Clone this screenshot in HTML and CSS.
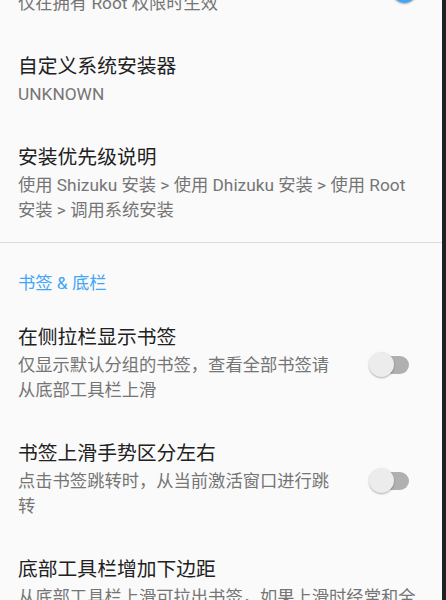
FILE: index.html
```html
<!DOCTYPE html>
<html lang="zh-CN">
<head>
  <meta charset="UTF-8">
  <title>设置</title>
  <link rel="stylesheet" href="styles.css">
</head>
<body>

  <div class="screen">
    <div class="list">

      <div class="pref">
        <div class="pref-text">
          <div class="pref-title">使用 Root 安装</div>
          <div class="pref-summary">仅在拥有 Root 权限时生效</div>
        </div>
        <div class="switch on"><span class="track"></span><span class="thumb"></span></div>
      </div>

      <div class="pref">
        <div class="pref-text">
          <div class="pref-title">自定义系统安装器</div>
          <div class="pref-summary">UNKNOWN</div>
        </div>
      </div>

      <div class="pref">
        <div class="pref-text">
          <div class="pref-title">安装优先级说明</div>
          <div class="pref-summary">使用 Shizuku 安装 &gt; 使用 Dhizuku 安装 &gt; 使用 Root 安装 &gt; 调用系统安装</div>
        </div>
      </div>

      <div class="category">
        <div class="category-title">书签 &amp; 底栏</div>
      </div>

      <div class="pref">
        <div class="pref-text">
          <div class="pref-title">在侧拉栏显示书签</div>
          <div class="pref-summary">仅显示默认分组的书签，查看全部书签请从底部工具栏上滑</div>
        </div>
        <div class="switch"><span class="track"></span><span class="thumb"></span></div>
      </div>

      <div class="pref">
        <div class="pref-text">
          <div class="pref-title">书签上滑手势区分左右</div>
          <div class="pref-summary">点击书签跳转时，从当前激活窗口进行跳转</div>
        </div>
        <div class="switch"><span class="track"></span><span class="thumb"></span></div>
      </div>

      <div class="pref">
        <div class="pref-text">
          <div class="pref-title">底部工具栏增加下边距</div>
          <div class="pref-summary">从底部工具栏上滑可拉出书签，如果上滑时经常和全面屏手势冲突，可以开启此选项</div>
        </div>
      </div>

    </div>
  </div>
  <div class="edge"></div>

</body>
</html>
```

FILE: styles.css
```css
html, body { margin: 0; height: 600px; overflow: hidden; }
body { display: flex; background: #fafafa; font-family: Roboto, "Noto Sans CJK SC", sans-serif; }
.screen { flex: 1; overflow: hidden; background: #fafafa; }
.edge { width: 4px; background: #1f2023; }

/* scrolled so the first row is mostly above the top */
.list { margin-top: -56px; }

.pref { display: flex; align-items: center; gap: 34px; padding: 20px 18px 19px 18px; }
.pref-text { flex: 1; min-width: 0; }
.pref-title { font-size: 19.8px; line-height: 24px; color: #212121; }
.pref-summary { font-size: 17.3px; line-height: 25px; color: #757575; margin-top: 3px; }

.category { border-top: 1px solid #dcdcdc; padding: 28px 18px 10px 18px; }
.category-title { font-size: 17.3px; line-height: 25px; color: #42a5f5; }

.switch { position: relative; width: 40px; height: 25px; margin-right: 15px; flex: none; }
.switch .track { position: absolute; right: 0; top: 4px; width: 31px; height: 18px; border-radius: 9px; background: #b0b0b0; }
.switch .thumb { position: absolute; left: 0; top: 0; width: 25px; height: 25px; border-radius: 50%; background: #ececec; box-shadow: 0 1px 2px rgba(0,0,0,0.3); }
.switch.on .track { background: #a9d4f8; }
.switch.on .thumb { left: 23px; background: #42a5f5; }
```
